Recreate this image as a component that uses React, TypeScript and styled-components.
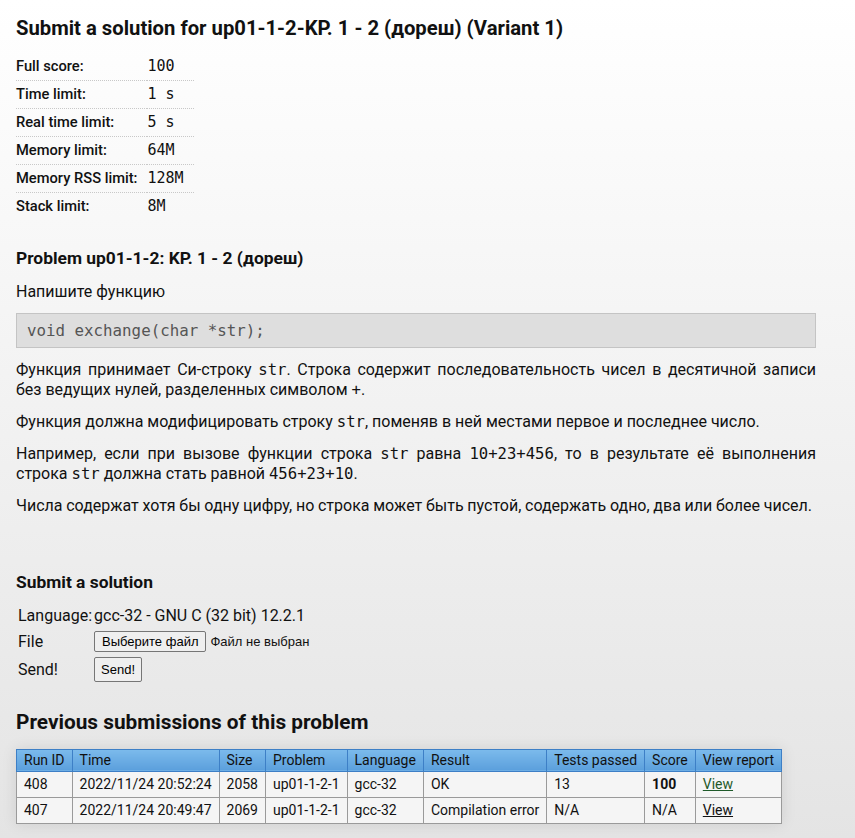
import React from "react";
import styled, { createGlobalStyle } from "styled-components";

const Global = createGlobalStyle`
  html { background: linear-gradient(#ffffff, #e4e4e4); min-height: 100%; }
  body {
    margin: 0;
    font-family: Roboto, "Noto Sans", sans-serif;
    color: #111;
    min-height: 838px;
  }
`;

const Page = styled.div`
  padding: 14px 16px 16px 16px;
  width: 800px;
`;

const Title = styled.h1`
  font-size: 20.25px;
  font-weight: 700;
  margin: 0 0 10.5px 0;
  line-height: 28px;
`;

const InfoTable = styled.table`
  border-collapse: collapse;
  font-size: 14.7px;
`;

const InfoRow = styled.tr`
  & + & td { border-top: 1px dotted #c8c8c8; }
`;

const InfoLabel = styled.td`
  font-weight: 500;
  padding: 0 10px 0 0;
  height: 27px;
`;

const InfoValue = styled.td`
  font-family: "DejaVu Sans Mono", monospace;
  font-size: 15px;
  padding: 0 10px 0 0;
`;

const H3 = styled.h3<{ $mt?: number; $mb?: number }>`
  font-size: 17.4px;
  font-weight: 700;
  margin: ${(p) => p.$mt ?? 26}px 0 ${(p) => p.$mb ?? 12}px 0;
  line-height: 24px;
`;

const H2 = styled.h2`
  font-size: 20.8px;
  font-weight: 700;
  margin: 22px 0 13px 0;
  line-height: 28px;
`;

const P = styled.p<{ $tight?: boolean }>`
  font-size: 16px;
  line-height: 19px;
  margin: 0 0 12px 0;
  text-align: justify;
  word-spacing: ${(p) => (p.$tight ? "-0.25px" : "normal")};
`;

const Code = styled.code`
  font-family: "DejaVu Sans Mono", monospace;
  font-size: 15.6px;
`;

const Pre = styled.pre`
  background: #dedede;
  border: 1px solid #c4c4c4;
  color: #555;
  font-family: "DejaVu Sans Mono", monospace;
  font-size: 15.8px;
  padding: 7px 10px;
  margin: 0 0 12px 0;
  line-height: 19px;
`;

const FormTable = styled.table`
  border-collapse: separate;
  border-spacing: 2px;
  font-size: 16px;
`;

const FormCell = styled.td<{ $h: number }>`
  padding: 0;
  height: ${(p) => p.$h}px;
  vertical-align: middle;
`;

const FileWrap = styled.span`
  display: inline-flex;
  align-items: center;
  gap: 4px;
  font-family: "Liberation Sans", Arial, sans-serif;
  font-size: 13px;
`;

const Button = styled.button<{ $tall?: boolean }>`
  font-family: "Liberation Sans", Arial, sans-serif;
  font-size: 13px;
  background: #efefef;
  border: 1px solid #767676;
  border-radius: 2px;
  padding: ${(p) => (p.$tall ? "4px 6px" : "2px 7px")};
  color: #000;
  line-height: 15px;
`;

const Spacer = styled.div<{ $h: number }>`
  height: ${(p) => p.$h}px;
`;

const RunTable = styled.table`
  border-collapse: collapse;
  font-size: 14px;
  box-shadow: 0 0 14px rgba(0, 0, 0, 0.1);
  background: #f5f5f5;
`;

const Th = styled.th`
  background: linear-gradient(#7cbbec, #5b9fdc);
  border: 1px solid #3d7fc6;
  color: #111;
  font-weight: 400;
  text-align: left;
  padding: 2px 7px;
  height: 17px;
  white-space: nowrap;
`;

const Td = styled.td<{ $bold?: boolean }>`
  border: 1px solid #9a9a9a;
  padding: 4px 7px;
  height: 17px;
  white-space: nowrap;
  font-weight: ${(p) => (p.$bold ? 700 : 400)};
`;

const Link = styled.a<{ $visited?: boolean }>`
  color: ${(p) => (p.$visited ? "#1f5a2a" : "#111")};
  text-decoration: underline;
`;

const limits: [string, string][] = [
  ["Full score:", "100"],
  ["Time limit:", "1 s"],
  ["Real time limit:", "5 s"],
  ["Memory limit:", "64M"],
  ["Memory RSS limit:", "128M"],
  ["Stack limit:", "8M"],
];

const runs = [
  { id: "408", time: "2022/11/24 20:52:24", size: "2058", prob: "up01-1-2-1", lang: "gcc-32", res: "OK", tests: "13", score: "100", bold: true, visited: true },
  { id: "407", time: "2022/11/24 20:49:47", size: "2069", prob: "up01-1-2-1", lang: "gcc-32", res: "Compilation error", tests: "N/A", score: "N/A", bold: false, visited: false },
];

export default function App() {
  return (
    <>
      <Global />
      <Page>
        <Title>Submit a solution for up01-1-2-KP. 1 - 2 (дореш) (Variant 1)</Title>
        <InfoTable>
          <tbody>
            {limits.map(([k, v]) => (
              <InfoRow key={k}>
                <InfoLabel>{k}</InfoLabel>
                <InfoValue>{v}</InfoValue>
              </InfoRow>
            ))}
          </tbody>
        </InfoTable>
        <H3>Problem up01-1-2: KP. 1 - 2 (дореш)</H3>
        <P>Напишите функцию</P>
        <Pre>void exchange(char *str);</Pre>
        <P>
          Функция принимает Си-строку <Code>str</Code>. Строка содержит последовательность чисел в десятичной записи без ведущих нулей, разделенных символом <Code>+</Code>.
        </P>
        <P>
          Функция должна модифицировать строку <Code>str</Code>, поменяв в ней местами первое и последнее число.
        </P>
        <P>
          Например, если при вызове функции строка <Code>str</Code> равна <Code>10+23+456</Code>, то в результате её выполнения строка <Code>str</Code> должна стать равной <Code>456+23+10</Code>.
        </P>
        <P $tight>Числа содержат хотя бы одну цифру, но строка может быть пустой, содержать одно, два или более чисел.</P>
        <Spacer $h={43} />
        <H3 $mt={0} $mb={8}>Submit a solution</H3>
        <FormTable>
          <tbody>
            <tr>
              <FormCell $h={24}>Language:</FormCell>
              <FormCell $h={24}>gcc-32 - GNU C (32 bit) 12.2.1</FormCell>
            </tr>
            <tr>
              <FormCell $h={24}>File</FormCell>
              <FormCell $h={24}>
                <FileWrap>
                  <Button>Выберите файл</Button>
                  Файл не выбран
                </FileWrap>
              </FormCell>
            </tr>
            <tr>
              <FormCell $h={28}>Send!</FormCell>
              <FormCell $h={28}>
                <Button $tall>Send!</Button>
              </FormCell>
            </tr>
          </tbody>
        </FormTable>
        <H2>Previous submissions of this problem</H2>
        <RunTable>
          <thead>
            <tr>
              <Th>Run ID</Th>
              <Th>Time</Th>
              <Th>Size</Th>
              <Th>Problem</Th>
              <Th>Language</Th>
              <Th>Result</Th>
              <Th>Tests passed</Th>
              <Th>Score</Th>
              <Th>View report</Th>
            </tr>
          </thead>
          <tbody>
            {runs.map((r) => (
              <tr key={r.id}>
                <Td>{r.id}</Td>
                <Td>{r.time}</Td>
                <Td>{r.size}</Td>
                <Td>{r.prob}</Td>
                <Td>{r.lang}</Td>
                <Td>{r.res}</Td>
                <Td>{r.tests}</Td>
                <Td $bold={r.bold}>{r.score}</Td>
                <Td>
                  <Link href="#" $visited={r.visited}>View</Link>
                </Td>
              </tr>
            ))}
          </tbody>
        </RunTable>
      </Page>
    </>
  );
}
